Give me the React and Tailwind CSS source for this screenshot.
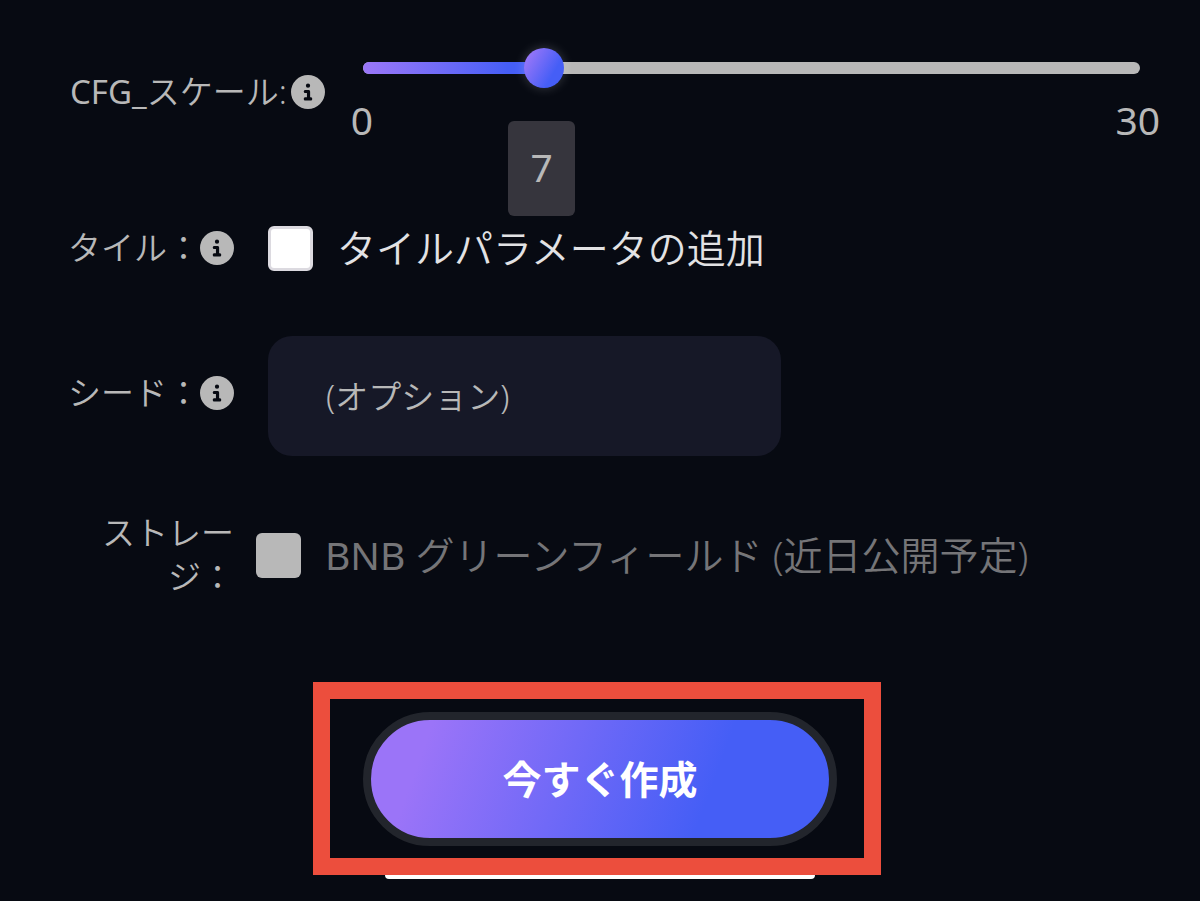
import React, { useState } from 'react';
import { FaCircleInfo } from 'react-icons/fa6';

const MAX_SCALE = 30;

const InfoButton = ({ label }) => (
  <button type="button" aria-label={label} className="shrink-0 text-[#b8b8b8]">
    <FaCircleInfo className="size-[34px]" />
  </button>
);

const ScaleSlider = ({ value, onChange }) => {
  const percent = (value / MAX_SCALE) * 100;

  return (
    <div className="flex-1 font-normal">
      <div className="grid items-center">
        <div className="col-start-1 row-start-1 mx-5 h-3 rounded-full bg-[#b8b8b8]">
          <div
            className="h-3 rounded-full bg-linear-to-r from-[#9b77f8] to-[#455ef6] to-80%"
            style={{ width: `${percent}%` }}
          />
        </div>
        <input
          id="cfg"
          type="range"
          min="0"
          max={MAX_SCALE}
          value={value}
          onChange={(e) => onChange(Number(e.target.value))}
          className="col-start-1 row-start-1 h-10 w-full appearance-none bg-transparent [&::-webkit-slider-thumb]:size-10 [&::-webkit-slider-thumb]:appearance-none [&::-webkit-slider-thumb]:rounded-full [&::-webkit-slider-thumb]:bg-[linear-gradient(120deg,#9b77f8_10%,#455ef6_70%)] [&::-webkit-slider-thumb]:shadow-[0_0_12px_rgba(255,255,255,0.2)]"
        />
      </div>
      <div className="flex justify-between pt-1.5 pl-2 text-[39px] leading-[52px]">
        <span>0</span>
        <span>{MAX_SCALE}</span>
      </div>
      <div className="-mt-[25px] px-5">
        <div style={{ marginLeft: `${percent}%` }}>
          <output
            htmlFor="cfg"
            className="-ml-9 flex h-[95px] w-[67px] items-center justify-center rounded-md bg-[#36353d] pb-1 text-[39px]"
          >
            {value}
          </output>
        </div>
      </div>
    </div>
  );
};

const App = () => {
  const [scale, setScale] = useState(7);
  const [tiling, setTiling] = useState(false);
  const [seed, setSeed] = useState('');

  return (
    <main
      lang="ja"
      className="min-h-screen bg-[#070a12] pt-12 pr-10 pb-[22px] pl-[70px] font-['Noto_Sans','Noto_Sans_CJK_JP',sans-serif] text-[33px] leading-[44px] font-[350] text-[#b8b8b8]"
    >
      <div className="flex items-start gap-[18px]">
        <div className="flex items-center gap-1 pt-[22px]">
          <label htmlFor="cfg" className="whitespace-nowrap">
            <span className="font-normal">CFG_</span>スケール:
          </label>
          <InfoButton label="CFG_スケールの説明" />
        </div>
        <ScaleSlider value={scale} onChange={setScale} />
      </div>

      <div className="mt-1.5 flex items-center">
        <div className="flex w-[198px] items-center">
          <span className="-ml-0.5 whitespace-nowrap">タイル：</span>
          <InfoButton label="タイルの説明" />
        </div>
        <label className="flex items-center gap-6 text-[39px] leading-[52px] text-[#e2e2e4]">
          <input
            type="checkbox"
            checked={tiling}
            onChange={(e) => setTiling(e.target.checked)}
            className="size-[45px] appearance-none rounded-md border-3 border-[#dcdae0] bg-white checked:bg-[#455ef6]"
          />
          タイルパラメータの追加
        </label>
      </div>

      <div className="mt-[62px] flex items-center">
        <div className="flex w-[198px] items-center pb-1.5">
          <label htmlFor="seed" className="-ml-0.5 whitespace-nowrap">シード：</label>
          <InfoButton label="シードの説明" />
        </div>
        <input
          id="seed"
          type="text"
          placeholder="(オプション)"
          value={seed}
          onChange={(e) => setSeed(e.target.value)}
          className="h-[120px] w-[513px] rounded-3xl bg-[#161827] px-[58px] placeholder:text-[#b8b8b8]"
        />
      </div>

      <div className="mt-[55px] flex items-center gap-[22px]">
        <label htmlFor="storage" className="w-[164px] pl-5 text-right">ストレージ：</label>
        <div className="flex items-center gap-6">
          <input
            id="storage"
            type="checkbox"
            disabled
            className="size-[45px] appearance-none rounded-md bg-[#b8b8b8]"
          />
          <label htmlFor="storage" className="text-[39px] leading-[52px] text-[#757578]">
            <span className="font-normal">BNB</span> グリーンフィールド (近日公開予定)
          </label>
        </div>
      </div>

      <div className="mt-[83px] -mr-10 -ml-[70px] flex flex-col items-center">
        <div className="-ml-1.5 border-[17px] border-[#ec4e3d] pt-[13px] pr-[27px] pb-3 pl-[33px]">
          <button
            type="button"
            className="block h-[134px] w-[474px] rounded-full border-8 border-[#22252c] bg-[linear-gradient(110deg,#9b74f8_14%,#455ef6_72%)] bg-origin-border text-[39px] font-bold text-white"
          >
            今すぐ作成
          </button>
        </div>
        <div className="h-1 w-[430px] rounded-b-full bg-white" />
      </div>
    </main>
  );
};

export default App;
